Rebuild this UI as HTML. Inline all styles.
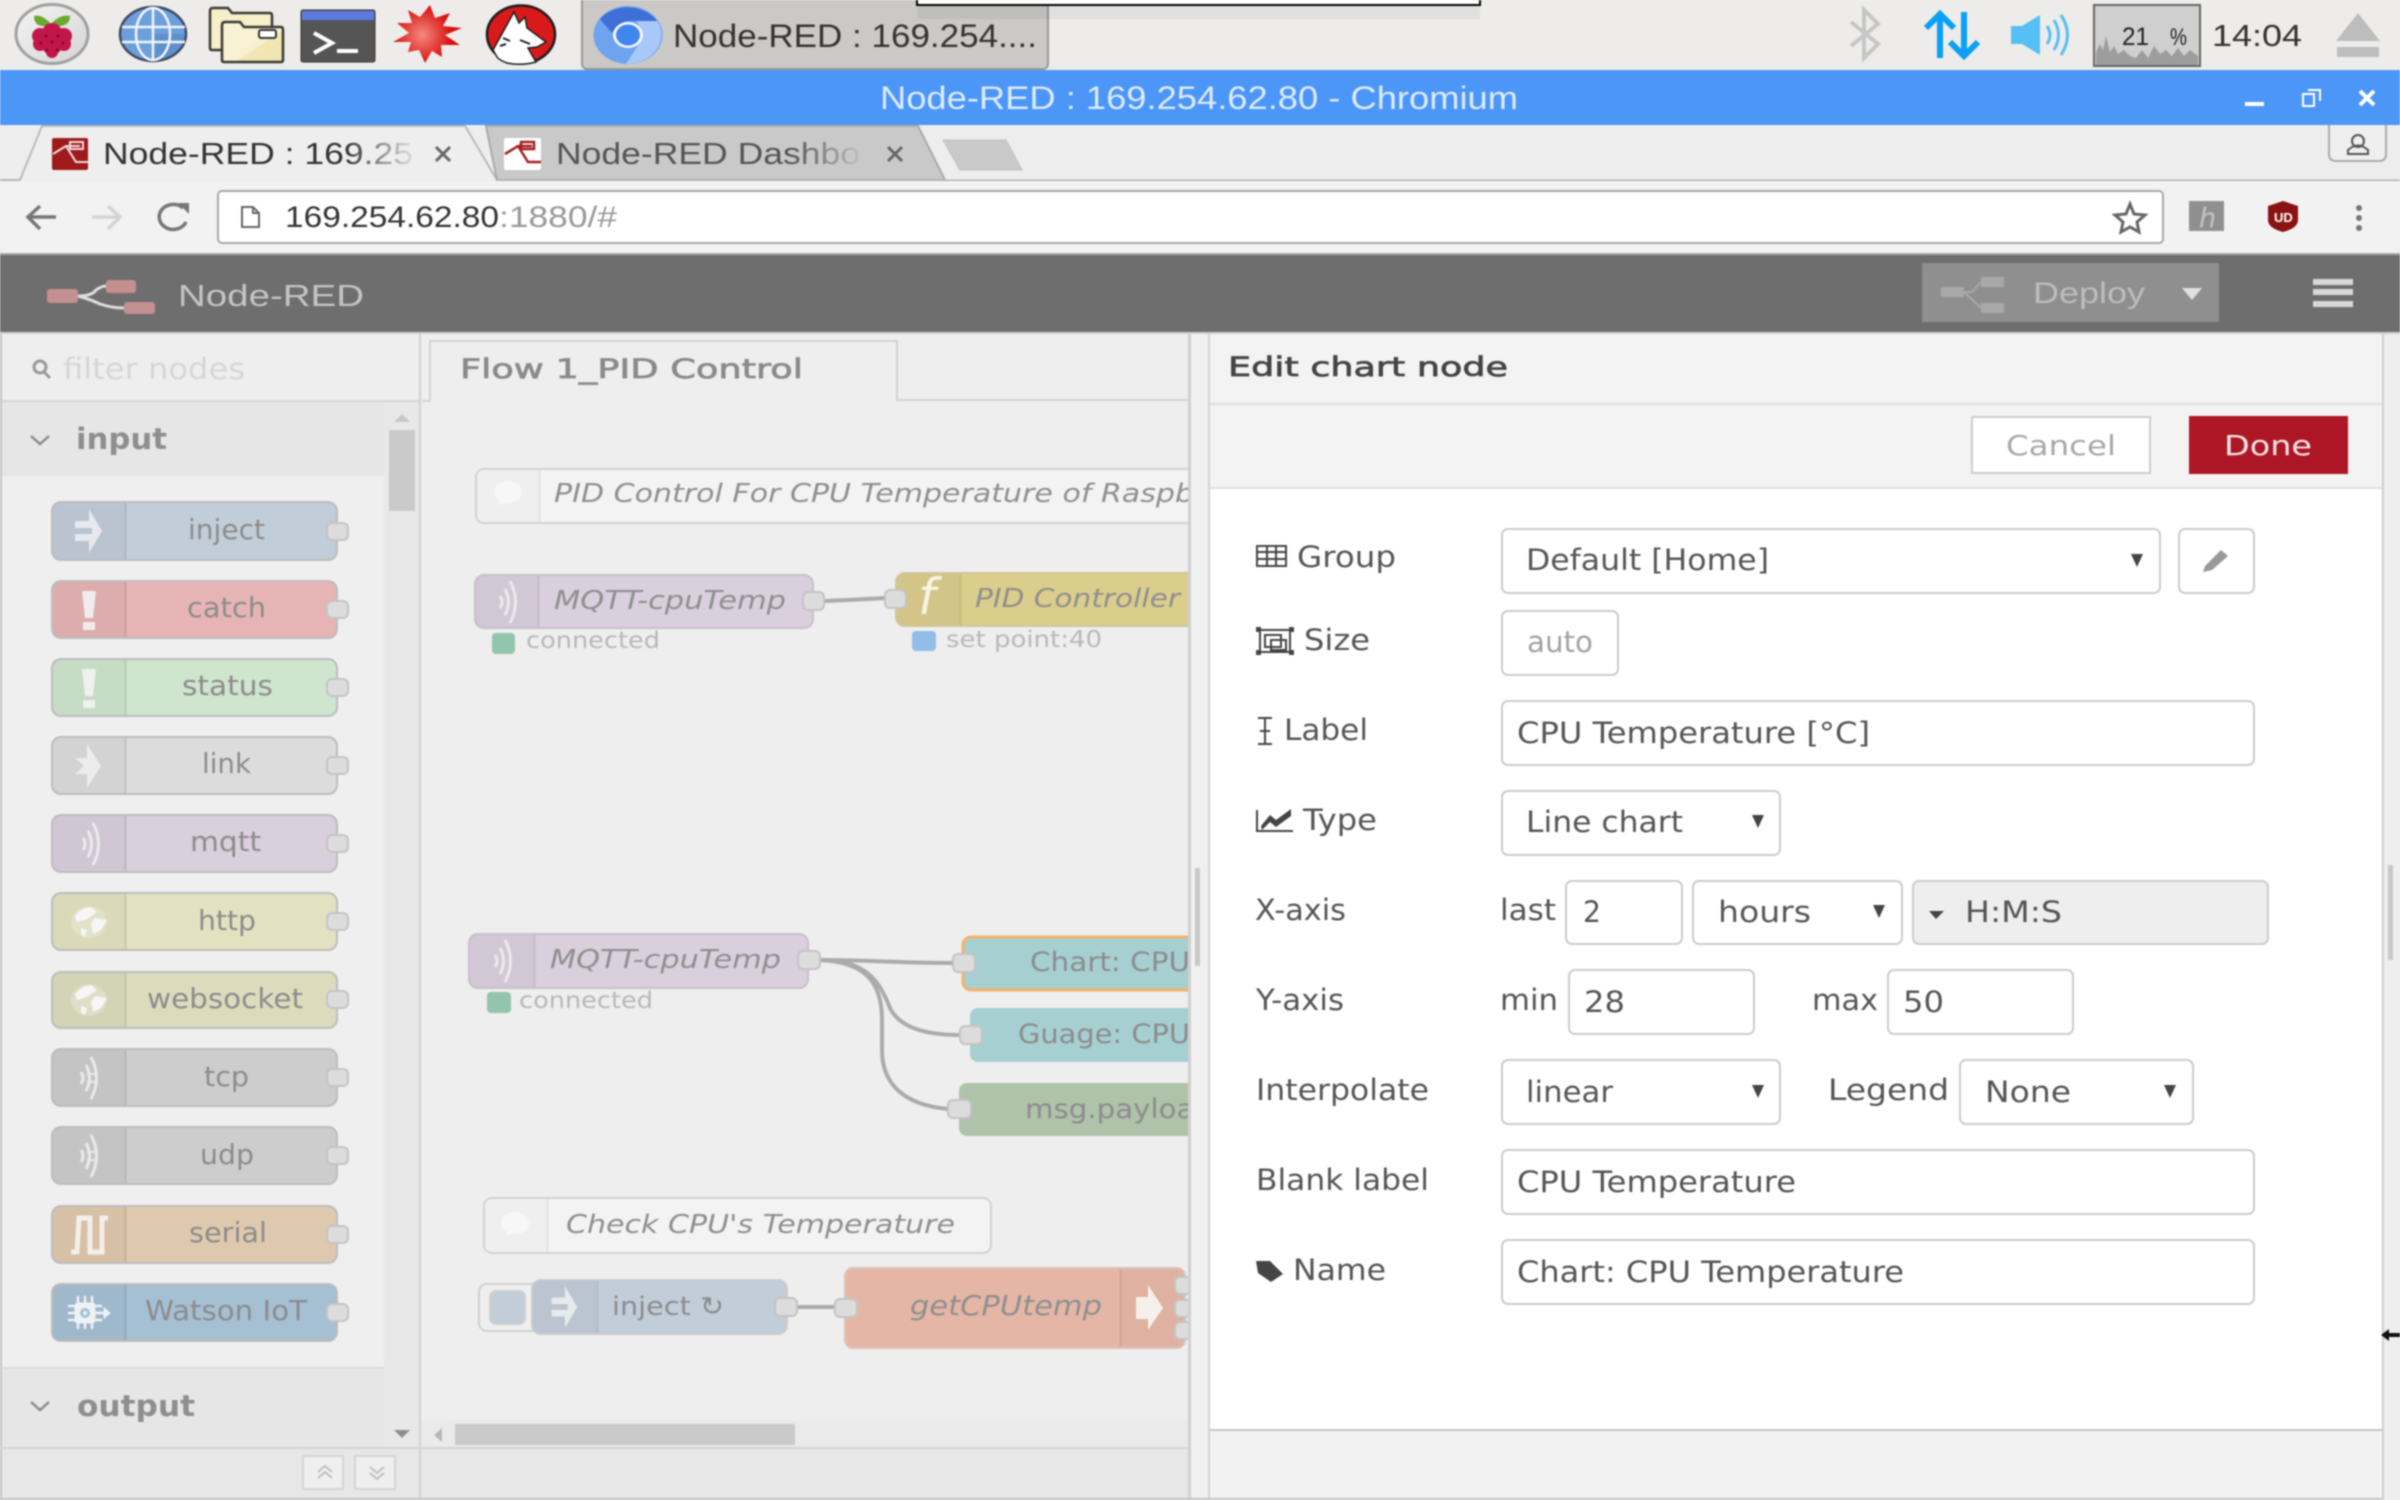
<!DOCTYPE html>
<html><head><meta charset="utf-8"><title>Node-RED : 169.254.62.80 - Chromium</title>
<style>
html,body{margin:0;padding:0;width:2400px;height:1500px;overflow:hidden;background:#eee}
svg{display:block;filter:blur(.75px)}
text{font-family:"DejaVu Sans","Liberation Sans",sans-serif}
.l{font-family:"Liberation Sans",sans-serif}
.n{font-size:28px;fill:#8c8c8c}
.f{font-size:26px;fill:#8f8f8f;font-style:italic}
.s{font-size:23px;fill:#b8b8b8}
.t{font-size:29px;fill:#555}
.i{font-size:29px;fill:#666}
.b{fill:#fff;stroke:#ccc;stroke-width:2}
.port{fill:#dcdcdc;stroke:#c4c4c4;stroke-width:2}
.w{fill:none;stroke:#ababab;stroke-width:4}
.sel{fill:#444}
</style></head><body>
<svg width="2400" height="1500" viewBox="0 0 2400 1500" xmlns="http://www.w3.org/2000/svg">
<defs>
<linearGradient id="fa" gradientUnits="userSpaceOnUse" x1="345" x2="413" y1="0" y2="0"><stop offset="0" stop-color="#333"/><stop offset="1" stop-color="#333" stop-opacity=".08"/></linearGradient>
<linearGradient id="fb" gradientUnits="userSpaceOnUse" x1="790" x2="860" y1="0" y2="0"><stop offset="0" stop-color="#555"/><stop offset="1" stop-color="#555" stop-opacity=".08"/></linearGradient>
<radialGradient id="wg" gradientUnits="userSpaceOnUse" cx="422" cy="35" r="30"><stop offset="0" stop-color="#f58a80"/><stop offset=".55" stop-color="#e2453f"/><stop offset="1" stop-color="#d80f0f"/></radialGradient>
<linearGradient id="ras" x1="0" y1="0" x2="1" y2="1"><stop offset="0" stop-color="#f4f4f4"/><stop offset="1" stop-color="#d4d4d4"/></linearGradient>
<linearGradient id="fol" x1="0" y1="0" x2="1" y2="1"><stop offset="0" stop-color="#f9f3d8"/><stop offset=".6" stop-color="#f7f0d0"/><stop offset=".62" stop-color="#f2e6b4"/><stop offset="1" stop-color="#f0e3ae"/></linearGradient>
<clipPath id="flow"><rect x="422" y="402" width="766" height="1018"/></clipPath>
<g id="inj" fill="#eef0f2" opacity=".85"><path d="M-13-10H1V-22L14 0 1 22V10H-13V3H4V-3H-13z"/></g>
<g id="exc" fill="#f4f4f4" opacity=".9"><path d="M-7-19H7L4 8H-4z"/><rect x="-6" y="12" width="12" height="8"/></g>
<g id="lnk" fill="#eeeeee" opacity=".9"><path d="M-1-22L13 0-1 22V8H-13L-4 0-13-8H-1z"/></g>
<g id="wav" fill="none" stroke="#f0f0f0" stroke-width="3" opacity=".85"><path d="M-6-6Q-2 0-6 6"/><path d="M-1-13Q6 0-1 13"/><path d="M4-21Q15 0 4 21"/></g>
<g id="wv2" fill="none" stroke="#f0f0f0" stroke-width="3" opacity=".85"><path d="M-8-6Q-4 0-8 6"/><path d="M-3-13Q4 0-3 13"/><path d="M2-21Q13 0 2 21"/><path d="M-2-4L9-4M-2 4L9 4" stroke-width="2"/></g>
<g id="glb" fill="#f6f6f6"><path d="M-18 0A18 16 0 0 1 18 0 18 16 0 0 1-18 0z" opacity=".3"/><path d="M-14-6Q-8-14 2-15L8-10-2-3-12 0zM6-4L18-2 12 8 4 12 2 2zM-8 6L-2 8-4 15-8 12z"/></g>
</defs>

<!-- base -->
<rect width="2400" height="1500" fill="#eeeeee"/>
<rect width="2400" height="70" fill="#edecea"/>

<!-- launcher icons -->
<ellipse cx="52" cy="34" rx="36" ry="29.500" fill="url(#ras)" stroke="#a0a0a0" stroke-width="3"/>
<path d="M34 16Q42 14 51 24 60 14 70 16 70 25 60 26H42Q34 25 34 16z" fill="#6aa82e"/>
<g fill="#c2154a"><circle cx="52" cy="33" r="10"/><circle cx="40" cy="36" r="8"/><circle cx="64" cy="36" r="8"/><circle cx="52" cy="45" r="10"/><circle cx="40" cy="44" r="7"/><circle cx="64" cy="44" r="7"/><circle cx="52" cy="52" r="6"/></g>
<g fill="#7d0d30"><circle cx="46" cy="36" r="1.500"/><circle cx="58" cy="36" r="1.500"/><circle cx="52" cy="42" r="1.500"/><circle cx="41" cy="43" r="1.500"/><circle cx="63" cy="43" r="1.500"/><circle cx="47" cy="50" r="1.500"/><circle cx="57" cy="50" r="1.500"/></g>
<ellipse cx="153" cy="34" rx="33" ry="27" fill="#6d9fdc" stroke="#3d4a60" stroke-width="2.500"/>
<path d="M153 34H185A33 27 0 0 1 153 60z" fill="#5f90cd"/>
<g fill="none" stroke="#f0f5fb" stroke-width="2.500"><ellipse cx="153" cy="34" rx="17" ry="26"/><path d="M153 7V61M122 27H185M122 42H185"/></g>
<path d="M210 11Q210 8 213 8H228L232 13H270Q272 13 272 16V48Q272 50 270 50H212Q210 50 210 48z" fill="#f7efca" stroke="#3a3a34" stroke-width="2.500"/>
<path d="M222 25Q222 22 225 22H240L244 27H281Q283 27 283 30V60Q283 62 281 62H224Q222 62 222 60z" fill="url(#fol)" stroke="#3a3a34" stroke-width="2.500"/>
<rect x="259" y="30" width="17" height="8" rx="2" fill="#fff" stroke="#333" stroke-width="2"/>
<rect x="301" y="10" width="74" height="52" rx="2" fill="#555" stroke="#333"/>
<rect x="302" y="11" width="72" height="9" fill="#5d7ae0"/>
<path d="M314 33L332 43 314 53" fill="none" stroke="#fff" stroke-width="4"/><rect x="337" y="49" width="21" height="4" fill="#fff"/>
<path d="M430 5L435 18 450 13 443 26 462 28 445 35 460 45 441 45 442 57 432 51 425 63 419 50 408 52 411 42 393 42 409 33 397 23 412 23 408 10 420 17z" fill="url(#wg)"/>
<ellipse cx="521" cy="34.500" rx="34" ry="29" fill="#d81a1a" stroke="#1c1c1c" stroke-width="2.500"/>
<path d="M493 50L514 12 519 23 525 17 527 28 546 42 537 47 528 48 536 62Q521 66 507 63 499 60 497 57z" fill="#fff" stroke="#1c1c1c" stroke-width="1.500"/>
<path d="M503 38L510 41M500 46L506 44M520 40L530 44" stroke="#222" stroke-width="2" fill="none"/>
<!-- taskbar button -->
<rect x="582" y="-4" width="466" height="73" rx="5" fill="#cbc9c5" stroke="#999" stroke-width="2"/>
<ellipse cx="628" cy="35" rx="34.500" ry="29" fill="#6ea3ef"/>
<path d="M600 19A34.500 29 0 0 1 657 21H628Q618 22 612 33z" fill="#3d6fd6"/>
<path d="M657 21A34.500 29 0 0 1 626 64L641 41Q644 30 636 21z" fill="#a8c8fa"/>
<ellipse cx="628" cy="35" rx="15" ry="13" fill="#f4f7fc"/><ellipse cx="628" cy="35" rx="12" ry="10.500" fill="#3f86ee"/>
<text class="l" x="673" y="47" font-size="32" fill="#333" textLength="364" lengthAdjust="spacingAndGlyphs">Node-RED : 169.254....</text>
<!-- tooltip sliver -->
<rect x="917" y="5" width="563" height="14" fill="#000" opacity=".05"/>
<rect x="917" y="-4" width="563" height="9" fill="#fff" stroke="#000" stroke-width="2"/>

<!-- tray -->
<path d="M1851 22L1878 44 1864 58V10L1878 24 1851 46" fill="none" stroke="#c6c6c6" stroke-width="4"/>
<path d="M1940 58V16M1926 28L1940 14 1954 28" fill="none" stroke="#0aa0f5" stroke-width="6"/>
<path d="M1964 12V54M1950 42L1964 56 1978 42" fill="none" stroke="#0aa0f5" stroke-width="6"/>
<path d="M2011 26H2022L2040 15V55L2022 44H2011z" fill="#56bff5"/>
<g fill="none" stroke="#56bff5" stroke-width="3"><path d="M2047 26Q2053 35 2047 44"/><path d="M2054 20Q2063 35 2054 50"/><path d="M2061 15Q2074 35 2061 55"/></g>
<rect x="2094" y="5" width="106" height="61" fill="#cfcfcf" stroke="#666" stroke-width="2"/>
<path d="M2096 65V52L2100 44 2103 50 2106 36 2110 52 2114 46 2118 54 2124 50 2130 56 2136 58 2142 50 2148 58 2154 46 2160 54 2166 50 2172 56 2178 48 2184 56 2190 50 2198 56V65z" fill="#9d9d9d"/>
<text class="l" x="2122" y="45" font-size="25" fill="#222" textLength="27" lengthAdjust="spacingAndGlyphs">21</text>
<text class="l" x="2170" y="45" font-size="24" fill="#222" textLength="17" lengthAdjust="spacingAndGlyphs">%</text>
<text class="l" x="2212" y="46" font-size="31" fill="#333" textLength="90" lengthAdjust="spacingAndGlyphs">14:04</text>
<path d="M2358 13L2380 41H2336z" fill="#bdbdbd"/><rect x="2337" y="47" width="42" height="10" fill="#bdbdbd"/>

<!-- title bar -->
<rect y="70" width="2400" height="55" fill="#4c96f8"/>
<text class="l" x="880" y="109" font-size="32" fill="#dcebff" textLength="638" lengthAdjust="spacingAndGlyphs">Node-RED : 169.254.62.80 - Chromium</text>
<rect x="2245" y="102" width="19" height="4" fill="#fff"/>
<path d="M2303 94H2314V106H2303z" fill="none" stroke="#fff" stroke-width="2"/><path d="M2308 90H2320V101" fill="none" stroke="#fff" stroke-width="2"/>
<path d="M2360 91L2374 105M2374 91L2360 105" stroke="#fff" stroke-width="4"/>

<!-- tab strip -->
<rect y="125" width="2400" height="56" fill="#ededed"/>
<path d="M0 180H20L42 126H465L497 180" fill="#eeeeee" stroke="#bbb" stroke-width="2"/>
<path d="M486 126H918L945 180H497z" fill="#c9c9c9" stroke="#aaa" stroke-width="2"/>
<path d="M943 140H1006L1022 170H960z" fill="#c9c9c9" stroke="#c0c0c0" stroke-width="1"/>
<path d="M0 180.500H20M497 180.500H2400" stroke="#b5b5b5" stroke-width="2"/>
<rect x="52" y="138" width="36" height="32" rx="2" fill="#9f1a1a"/>
<g fill="none" stroke="#f0dcdc" stroke-width="2"><path d="M53 154L66 146H80M66 146L76 162H88"/><rect x="70" y="142" width="13" height="7"/></g>
<text class="l" x="103" y="164" font-size="31" fill="url(#fa)" textLength="310" lengthAdjust="spacingAndGlyphs">Node-RED : 169.25</text>
<path d="M436 147L450 161M450 147L436 161" stroke="#666" stroke-width="3"/>
<rect x="504" y="138" width="37" height="32" rx="2" fill="#fff"/>
<g fill="none" stroke="#a52020" stroke-width="2.500"><path d="M505 154L518 146H532M518 146L528 162H541"/><rect x="521" y="142" width="13" height="7"/></g>
<text class="l" x="556" y="164" font-size="31" fill="url(#fb)" textLength="304" lengthAdjust="spacingAndGlyphs">Node-RED Dashbo</text>
<path d="M888 147L902 161M902 147L888 161" stroke="#666" stroke-width="3"/>
<path d="M2329 125V154Q2329 161 2336 161H2379Q2386 161 2386 154V125" fill="#efefef" stroke="#aaa" stroke-width="2"/>
<circle cx="2358" cy="141" r="6" fill="none" stroke="#555" stroke-width="2"/><path d="M2348 154V150Q2358 141 2368 150V154z" fill="none" stroke="#555" stroke-width="2"/>

<!-- toolbar -->
<rect y="181" width="2400" height="72" fill="#f2f2f2"/>
<path d="M28 217H56M40 206L28 217 40 229" fill="none" stroke="#777" stroke-width="3.500"/>
<path d="M92 217H120M108 206L120 217 108 229" fill="none" stroke="#d4d4d4" stroke-width="3.500"/>
<path d="M183 208A14 12.500 0 1 0 186 222" fill="none" stroke="#777" stroke-width="3.500"/><path d="M178 203H189V214z" fill="#777"/>
<rect x="218" y="191" width="1945" height="52" rx="4" fill="#fff" stroke="#a8a8a8" stroke-width="2"/>
<path d="M242 207H253L259 213V227H242zM253 207V213H259" fill="none" stroke="#666" stroke-width="2"/>
<text class="l" x="285" y="227" font-size="30" fill="#333" textLength="214" lengthAdjust="spacingAndGlyphs">169.254.62.80</text>
<text class="l" x="499" y="227" font-size="30" fill="#999" textLength="118" lengthAdjust="spacingAndGlyphs">:1880/#</text>
<path d="M2130 204L2134 214 2145 215 2137 222 2139 232 2130 227 2121 232 2123 222 2115 215 2126 214z" fill="none" stroke="#666" stroke-width="3"/>
<rect x="2189" y="201" width="35" height="30" fill="#8f8f8f"/>
<text x="2199" y="227" font-size="27" font-style="italic" fill="#c4c4c4" font-family="Liberation Serif,serif">h</text>
<path d="M2283 201L2298 206V220Q2298 228 2283 232 2268 228 2268 220V206z" fill="#8a1212"/>
<text class="l" x="2274" y="222" font-size="13" font-weight="bold" fill="#fff">UD</text>
<g fill="#777"><circle cx="2359" cy="208" r="3"/><circle cx="2359" cy="218" r="3"/><circle cx="2359" cy="228" r="3"/></g>

<!-- node-red header -->
<rect y="253" width="2400" height="79" fill="#6e6e6e"/>
<rect y="253" width="2400" height="2" fill="#a8a8a8"/>
<path d="M78 296Q92 296 96 290 102 286 106 286M78 296Q92 300 100 304 112 308 124 308" fill="none" stroke="#ddd" stroke-width="3"/>
<rect x="47" y="289" width="31" height="14" rx="3" fill="#c48f8f"/><rect x="106" y="280" width="30" height="13" rx="3" fill="#c48f8f"/><rect x="124" y="302" width="31" height="12" rx="3" fill="#c48f8f"/>
<text class="l" x="178" y="306" font-size="31" fill="#c4c4c4" textLength="186" lengthAdjust="spacingAndGlyphs">Node-RED</text>
<rect x="1922" y="263" width="297" height="59" fill="#8f8f8f"/>
<path d="M1964 292H1972L1981 282M1964 292L1981 308" fill="none" stroke="#a8a8a8" stroke-width="2"/>
<rect x="1941" y="287" width="23" height="10" fill="#a8a8a8"/><rect x="1981" y="277" width="23" height="10" fill="#a8a8a8"/><rect x="1981" y="303" width="23" height="10" fill="#a8a8a8"/>
<text class="l" x="2033" y="303" font-size="30" fill="#bdbdbd" textLength="112" lengthAdjust="spacingAndGlyphs">Deploy</text>
<path d="M2182 288H2202L2192 300z" fill="#e0e0e0"/>
<g fill="#d8d8d8"><rect x="2313" y="279" width="40" height="6"/><rect x="2313" y="289" width="40" height="6"/><rect x="2313" y="301" width="40" height="6"/></g>
<rect y="332" width="2400" height="2" fill="#d0d0d0"/>

<!-- sidebar -->
<rect x="0" y="334" width="2" height="1166" fill="#c4c4c4"/>
<circle cx="40" cy="367" r="6" fill="none" stroke="#9a9a9a" stroke-width="3"/><path d="M44 372L50 378" stroke="#9a9a9a" stroke-width="3"/>
<text class="i" x="63" y="379" style="fill:#d6d6d6" textLength="182" lengthAdjust="spacingAndGlyphs">filter nodes</text>
<rect x="2" y="400" width="418" height="2" fill="#d4d4d4"/>
<rect x="419" y="334" width="2" height="1166" fill="#d0d0d0"/>
<rect x="2" y="402" width="382" height="74" fill="#e6e6e6"/>
<rect x="2" y="476" width="382" height="892" fill="#efefef"/>
<rect x="384" y="402" width="35" height="1045" fill="#e8e8e8"/>
<path d="M394 422L402 414 410 422z" fill="#c8c8c8"/><rect x="389" y="430" width="26" height="81" fill="#cacaca"/>
<path d="M394 1430L402 1438 410 1430z" fill="#8e8e8e"/>
<path d="M31 436L40 444 49 436" fill="none" stroke="#8c8c8c" stroke-width="2.500"/>
<text x="76" y="449" font-size="29" font-weight="bold" fill="#8e8e8e" textLength="91" lengthAdjust="spacingAndGlyphs">input</text>

<!-- palette -->
<g stroke="#bdbdbd" stroke-width="2">
<rect x="52" y="502" width="285" height="58" rx="9" fill="#c1cdd9"/>
<rect x="52" y="581" width="285" height="57" rx="9" fill="#e6b4b4"/>
<rect x="52" y="659" width="285" height="57" rx="9" fill="#cfe5ce"/>
<rect x="52" y="737" width="285" height="57" rx="9" fill="#dcdcdc"/>
<rect x="52" y="815" width="285" height="57" rx="9" fill="#dacfdd"/>
<rect x="52" y="893" width="285" height="57" rx="9" fill="#e3e2c0"/>
<rect x="52" y="972" width="285" height="56" rx="9" fill="#dcdcbd"/>
<rect x="52" y="1049" width="285" height="57" rx="9" fill="#cdcdcd"/>
<rect x="52" y="1127" width="285" height="57" rx="9" fill="#cdcdcd"/>
<rect x="52" y="1206" width="285" height="57" rx="9" fill="#dfc9ae"/>
<rect x="52" y="1284" width="285" height="57" rx="9" fill="#a5bfd3"/>
</g>
<g fill="#000" opacity=".035">
<path d="M61 503H125V559H61Q53 559 53 551V511Q53 503 61 503z"/>
<path d="M61 582H125V637H61Q53 637 53 629V590Q53 582 61 582z"/>
<path d="M61 660H125V715H61Q53 715 53 707V668Q53 660 61 660z"/>
<path d="M61 738H125V793H61Q53 793 53 785V746Q53 738 61 738z"/>
<path d="M61 816H125V871H61Q53 871 53 863V824Q53 816 61 816z"/>
<path d="M61 894H125V949H61Q53 949 53 941V902Q53 894 61 894z"/>
<path d="M61 973H125V1027H61Q53 1027 53 1019V981Q53 973 61 973z"/>
<path d="M61 1050H125V1105H61Q53 1105 53 1097V1058Q53 1050 61 1050z"/>
<path d="M61 1128H125V1183H61Q53 1183 53 1175V1136Q53 1128 61 1128z"/>
<path d="M61 1207H125V1262H61Q53 1262 53 1254V1215Q53 1207 61 1207z"/>
<path d="M61 1285H125V1340H61Q53 1340 53 1332V1293Q53 1285 61 1285z"/>
</g>
<g stroke="#000" stroke-opacity=".1" stroke-width="2">
<path d="M125.500 503V559M125.500 582V637M125.500 660V715M125.500 738V793M125.500 816V871M125.500 894V949M125.500 973V1027M125.500 1050V1105M125.500 1128V1183M125.500 1207V1262M125.500 1285V1340"/>
</g>
<use href="#inj" x="88" y="531"/>
<use href="#exc" x="89" y="610"/>
<use href="#exc" x="89" y="688"/>
<use href="#lnk" x="88" y="766"/>
<use href="#wav" x="89" y="844"/>
<use href="#glb" x="89" y="922"/>
<use href="#glb" x="89" y="1000"/>
<use href="#wv2" x="89" y="1078"/>
<use href="#wv2" x="89" y="1156"/>
<path d="M71 1252H77L79 1218H90V1252H102V1218H108" fill="none" stroke="#f4efe8" stroke-width="5"/>
<g fill="#eef2f6" stroke="#eef2f6"><rect x="75" y="1303" width="20" height="20" rx="3"/><path d="M78 1296V1329M85 1296V1329M92 1296V1329M68 1306H102M68 1313H102M68 1320H102" stroke-width="2.500"/><path d="M95 1313H105" stroke-width="2.500"/><path d="M104 1308L110 1313 104 1318z"/></g>
<circle cx="85" cy="1313" r="5" fill="#a5bfd3"/><circle cx="85" cy="1313" r="2" fill="#eef2f6"/>
<g class="port">
<rect x="327" y="523" width="21" height="17" rx="5"/><rect x="327" y="601" width="21" height="17" rx="5"/><rect x="327" y="679" width="21" height="17" rx="5"/><rect x="327" y="757" width="21" height="17" rx="5"/><rect x="327" y="835" width="21" height="17" rx="5"/><rect x="327" y="913" width="21" height="17" rx="5"/><rect x="327" y="991" width="21" height="17" rx="5"/><rect x="327" y="1069" width="21" height="17" rx="5"/><rect x="327" y="1147" width="21" height="17" rx="5"/><rect x="327" y="1226" width="21" height="17" rx="5"/><rect x="327" y="1304" width="21" height="17" rx="5"/>
</g>
<text class="n" x="188" y="539" textLength="77" lengthAdjust="spacingAndGlyphs">inject</text>
<text class="n" x="187" y="617" textLength="79" lengthAdjust="spacingAndGlyphs">catch</text>
<text class="n" x="182" y="695" textLength="91" lengthAdjust="spacingAndGlyphs">status</text>
<text class="n" x="202" y="773" textLength="49" lengthAdjust="spacingAndGlyphs">link</text>
<text class="n" x="190" y="851" textLength="71" lengthAdjust="spacingAndGlyphs">mqtt</text>
<text class="n" x="198" y="930" textLength="58" lengthAdjust="spacingAndGlyphs">http</text>
<text class="n" x="147" y="1008" textLength="156" lengthAdjust="spacingAndGlyphs">websocket</text>
<text class="n" x="204" y="1086" textLength="45" lengthAdjust="spacingAndGlyphs">tcp</text>
<text class="n" x="200" y="1164" textLength="54" lengthAdjust="spacingAndGlyphs">udp</text>
<text class="n" x="189" y="1242" textLength="78" lengthAdjust="spacingAndGlyphs">serial</text>
<text class="n" x="145" y="1320" textLength="162" lengthAdjust="spacingAndGlyphs">Watson IoT</text>

<rect x="2" y="1367" width="382" height="2" fill="#dadada"/>
<rect x="2" y="1369" width="382" height="78" fill="#e6e6e6"/>
<path d="M31 1402L40 1410 49 1402" fill="none" stroke="#8c8c8c" stroke-width="2.500"/>
<text x="77" y="1416" font-size="29" font-weight="bold" fill="#8e8e8e" textLength="118" lengthAdjust="spacingAndGlyphs">output</text>
<rect x="0" y="1447" width="1190" height="2" fill="#d4d4d4"/>
<rect x="2" y="1449" width="1188" height="49" fill="#e7e7e7"/>
<rect x="419" y="1449" width="2" height="49" fill="#d0d0d0"/>
<rect x="303" y="1456" width="40" height="33" fill="#efefef" stroke="#d4d4d4" stroke-width="2"/>
<rect x="355" y="1456" width="40" height="33" fill="#efefef" stroke="#d4d4d4" stroke-width="2"/>
<path d="M318 1472L325 1466 332 1472M318 1478L325 1472 332 1478" fill="none" stroke="#c0c0c0" stroke-width="2"/>
<path d="M370 1467L377 1473 384 1467M370 1473L377 1479 384 1473" fill="none" stroke="#c0c0c0" stroke-width="2"/>
<rect x="0" y="1498" width="2400" height="2" fill="#c4c4c4"/>

<!-- workspace -->
<path d="M430 401V341H897V400H1190" fill="#eeeeee" stroke="#d2d2d2" stroke-width="2"/>
<text x="460" y="378" font-size="27" fill="#8a8a8a" stroke="#8a8a8a" stroke-width=".7" textLength="343" lengthAdjust="spacingAndGlyphs">Flow 1_PID Control</text>
<path d="M422 401H430" stroke="#d2d2d2" stroke-width="2"/>

<g clip-path="url(#flow)">
<!-- comment 1 -->
<rect x="476" y="469" width="760" height="54" rx="8" fill="#f3f3f3" stroke="#d2d2d2" stroke-width="2"/>
<path d="M539 470H484Q477 470 477 478V514Q477 522 484 522H539z" fill="#efefef"/><path d="M539.500 470V522" stroke="#e2e2e2" stroke-width="2"/>
<ellipse cx="508" cy="492" rx="14" ry="11" fill="#f7f7f7"/><path d="M496 505L504 498 510 502z" fill="#f7f7f7"/>
<text class="f" x="554" y="502" textLength="640" lengthAdjust="spacingAndGlyphs">PID Control For CPU Temperature of Raspb</text>

<!-- mqtt 1 -->
<path class="w" d="M824 601Q850 600 885 598"/>
<rect x="475" y="575" width="338" height="53" rx="9" fill="#dacfdd" stroke="#c8c0cc" stroke-width="2"/>
<path d="M538 576H484Q476 576 476 584V619Q476 627 484 627H538z" fill="#000" opacity=".035"/><path d="M538.500 576V627" stroke="#000" stroke-opacity=".08" stroke-width="2"/>
<use href="#wav" x="506" y="602"/>
<text class="f" x="554" y="609" textLength="232" lengthAdjust="spacingAndGlyphs">MQTT-cpuTemp</text>
<rect class="port" x="803" y="592" width="21" height="18" rx="5"/>
<rect x="492" y="633" width="23" height="21" rx="4" fill="#93c4ac"/>
<text class="s" x="526" y="648" textLength="134" lengthAdjust="spacingAndGlyphs">connected</text>

<!-- PID -->
<rect x="896" y="573" width="340" height="53" rx="9" fill="#dbcd8c" stroke="#cfc79c" stroke-width="2"/>
<path d="M960 574H905Q897 574 897 582V617Q897 625 905 625H960z" fill="#000" opacity=".035"/><path d="M960.500 574V625" stroke="#000" stroke-opacity=".07" stroke-width="2"/>
<text x="918" y="614" font-size="50" font-style="italic" fill="#f6f3e4" font-family="Liberation Serif,serif">f</text>
<text class="f" x="975" y="607" textLength="205" lengthAdjust="spacingAndGlyphs">PID Controller</text>
<rect class="port" x="885" y="590" width="21" height="18" rx="5"/>
<rect x="912" y="631" width="24" height="20" rx="4" fill="#92bde9"/>
<text class="s" x="946" y="647" textLength="156" lengthAdjust="spacingAndGlyphs">set point:40</text>

<!-- wires 2 -->
<path class="w" d="M820 960C880 960 890 963 953 963"/>
<path class="w" d="M820 960C865 960 878 980 888 1003C895 1025 920 1035 960 1035"/>
<path class="w" d="M820 960C868 962 882 985 882 1020V1050C882 1085 905 1105 948 1109"/>

<!-- mqtt 2 -->
<rect x="469" y="934" width="339" height="54" rx="9" fill="#dacfdd" stroke="#c8c0cc" stroke-width="2"/>
<path d="M534 935H478Q470 935 470 943V979Q470 987 478 987H534z" fill="#000" opacity=".035"/><path d="M534.500 935V987" stroke="#000" stroke-opacity=".08" stroke-width="2"/>
<use href="#wav" x="501" y="961"/>
<text class="f" x="550" y="968" textLength="231" lengthAdjust="spacingAndGlyphs">MQTT-cpuTemp</text>
<rect class="port" x="798" y="951" width="22" height="18" rx="5"/>
<rect x="487" y="992" width="24" height="21" rx="4" fill="#93c4ac"/>
<text class="s" x="519" y="1008" textLength="134" lengthAdjust="spacingAndGlyphs">connected</text>

<!-- chart etc -->
<rect x="963" y="937" width="300" height="53" rx="8" fill="#a6cfd2" stroke="#f5b26b" stroke-width="3"/>
<text x="1030" y="971" font-size="27" fill="#8c8c8c" textLength="160" lengthAdjust="spacingAndGlyphs">Chart: CPU</text>
<rect class="port" x="953" y="954" width="22" height="18" rx="5"/>
<rect x="970" y="1008" width="300" height="54" rx="8" fill="#a6cfd2"/>
<text x="1018" y="1043" font-size="27" fill="#8c8c8c" textLength="172" lengthAdjust="spacingAndGlyphs">Guage: CPU</text>
<rect class="port" x="960" y="1026" width="22" height="18" rx="5"/>
<rect x="959" y="1083" width="300" height="53" rx="8" fill="#afc2aa"/>
<text x="1025" y="1118" font-size="27" fill="#8c8c8c" textLength="188" lengthAdjust="spacingAndGlyphs">msg.payload</text>
<rect class="port" x="948" y="1100" width="23" height="18" rx="5"/>

<!-- comment 2 -->
<rect x="484" y="1198" width="507" height="55" rx="8" fill="#f3f3f3" stroke="#d2d2d2" stroke-width="2"/>
<path d="M547 1199H492Q485 1199 485 1207V1244Q485 1252 492 1252H547z" fill="#efefef"/><path d="M547.500 1199V1252" stroke="#e2e2e2" stroke-width="2"/>
<ellipse cx="515" cy="1223" rx="14" ry="11" fill="#f7f7f7"/><path d="M503 1236L511 1229 517 1233z" fill="#f7f7f7"/>
<text class="f" x="566" y="1233" textLength="389" lengthAdjust="spacingAndGlyphs">Check CPU's Temperature</text>

<!-- inject -->
<path class="w" d="M797 1307H835"/>
<rect x="479" y="1284" width="70" height="47" rx="8" fill="#eeeeee" stroke="#d0d0d0" stroke-width="2"/>
<rect x="490" y="1291" width="35" height="33" rx="6" fill="#c1cdd9" stroke="#cfcfcf" stroke-width="2"/>
<rect x="532" y="1280" width="255" height="54" rx="9" fill="#c1cdd9" stroke="#cccccc" stroke-width="2"/>
<path d="M597 1281H541Q533 1281 533 1289V1325Q533 1333 541 1333H597z" fill="#000" opacity=".035"/><path d="M597.500 1281V1333" stroke="#000" stroke-opacity=".07" stroke-width="2"/>
<g transform="translate(564 1307) scale(.95)"><use href="#inj"/></g>
<text x="612" y="1315" font-size="26" fill="#8c8c8c" textLength="112" lengthAdjust="spacingAndGlyphs">inject ↻</text>
<rect class="port" x="775" y="1298" width="22" height="18" rx="5"/>

<!-- getCPUtemp -->
<rect x="845" y="1268" width="340" height="80" rx="8" fill="#e5b6a5" stroke="#dcc2b8" stroke-width="2"/>
<path d="M1120 1269H1177Q1184 1269 1184 1277V1339Q1184 1347 1177 1347H1120z" fill="#000" opacity=".025"/><path d="M1120.500 1269V1347" stroke="#000" stroke-opacity=".06" stroke-width="2"/>
<path d="M1136 1297H1148V1285L1163 1308 1148 1330V1319H1136z" fill="#f6f0ec"/>
<text class="f" x="910" y="1315" style="font-size:28px" textLength="192" lengthAdjust="spacingAndGlyphs">getCPUtemp</text>
<rect class="port" x="835" y="1299" width="22" height="18" rx="5"/>
<rect class="port" x="1175" y="1277" width="22" height="17" rx="5"/>
<rect class="port" x="1175" y="1300" width="22" height="17" rx="5"/>
<rect class="port" x="1175" y="1322" width="22" height="17" rx="5"/>
</g>

<!-- flow scrollbar -->
<rect x="422" y="1420" width="768" height="27" fill="#eaeaea"/>
<path d="M442 1428L434 1435 442 1442z" fill="#b8b8b8"/>
<rect x="455" y="1424" width="340" height="21" fill="#cacaca"/>

<!-- edit tray -->
<rect x="1190" y="334" width="19" height="1164" fill="#f0f0f0"/>
<rect x="1188" y="334" width="3" height="1164" fill="#d0d0d0"/>
<rect x="1208" y="334" width="2" height="1164" fill="#d4d4d4"/>
<rect x="1195" y="868" width="5" height="98" fill="#c8c8c8"/>
<rect x="1210" y="334" width="1172" height="69" fill="#f3f3f3"/>
<text x="1228" y="376" font-size="27" fill="#444" stroke="#444" stroke-width=".7" textLength="280" lengthAdjust="spacingAndGlyphs">Edit chart node</text>
<rect x="1210" y="403" width="1172" height="2" fill="#dedede"/>
<rect x="1210" y="405" width="1172" height="82" fill="#f3f3f3"/>
<rect x="1210" y="487" width="1172" height="2" fill="#dedede"/>
<rect x="1210" y="489" width="1172" height="940" fill="#fff"/>
<rect x="1210" y="1429" width="1172" height="2" fill="#c4c4c4"/>
<rect x="1210" y="1431" width="1172" height="67" fill="#f2f2f2"/>
<rect x="2382" y="334" width="2" height="1166" fill="#cfcfcf"/>
<rect x="2384" y="334" width="16" height="1166" fill="#eeeeee"/>
<rect x="2388" y="865" width="5" height="95" fill="#c8c8c8"/>

<rect x="1972" y="417" width="178" height="56" fill="#fff" stroke="#ccc" stroke-width="2"/>
<text x="2006" y="455" font-size="28" fill="#a8a8a8" textLength="110" lengthAdjust="spacingAndGlyphs">Cancel</text>
<rect x="2189" y="416" width="159" height="58" fill="#ad1625"/>
<text x="2224" y="455" font-size="28" fill="#f4e6e6" textLength="88" lengthAdjust="spacingAndGlyphs">Done</text>

<!-- form boxes -->
<rect class="b" x="1502" y="529" width="658" height="64" rx="6"/>
<rect class="b" x="2179" y="529" width="75" height="64" rx="6"/>
<rect class="b" x="1502" y="611" width="116" height="64" rx="6"/>
<rect class="b" x="1502" y="701" width="752" height="64" rx="6"/>
<rect class="b" x="1502" y="791" width="278" height="64" rx="6"/>
<rect class="b" x="1566" y="881" width="116" height="63" rx="6"/>
<rect class="b" x="1693" y="881" width="209" height="63" rx="6"/>
<rect x="1913" y="881" width="355" height="63" rx="6" fill="#eeeeee" stroke="#ccc" stroke-width="2"/>
<rect class="b" x="1569" y="970" width="185" height="64" rx="6"/>
<rect class="b" x="1888" y="970" width="185" height="64" rx="6"/>
<rect class="b" x="1502" y="1060" width="278" height="64" rx="6"/>
<rect class="b" x="1960" y="1060" width="233" height="64" rx="6"/>
<rect class="b" x="1502" y="1150" width="752" height="64" rx="6"/>
<rect class="b" x="1502" y="1240" width="752" height="64" rx="6"/>

<!-- select arrows -->
<path class="sel" d="M2131 554H2143L2137 567z"/>
<path class="sel" d="M1752 815H1764L1758 828z"/>
<path class="sel" d="M1873 905H1885L1879 918z"/>
<path class="sel" d="M1929 911H1944L1936 919z"/>
<path class="sel" d="M1752 1085H1764L1758 1098z"/>
<path class="sel" d="M2164 1085H2176L2170 1098z"/>
<path d="M2205 566L2221 550 2228 556 2212 570 2203 572z" fill="#999"/>

<!-- labels -->
<g fill="none" stroke="#444" stroke-width="2">
<rect x="1257" y="546" width="29" height="20"/><path d="M1257 552H1286M1257 559H1286M1267 546V566M1276 546V566"/>
<rect x="1260" y="630" width="30" height="22"/><rect x="1265" y="635" width="16" height="12"/><rect x="1271" y="640" width="15" height="10"/>
<path d="M1258 718H1272M1258 744H1272M1265 718V744M1260 731H1270"/>
<path d="M1257 810V831H1293"/>
</g>
<g fill="#444"><rect x="1256" y="627" width="5" height="5"/><rect x="1289" y="627" width="5" height="5"/><rect x="1256" y="650" width="5" height="5"/><rect x="1289" y="650" width="5" height="5"/></g>
<path d="M1261 826L1270 815 1276 820 1291 809V816L1276 827 1270 822 1262 830z" fill="#444"/>
<path d="M1256 1261H1270L1283 1274 1271 1282 1258 1273z" fill="#444"/>

<text class="t" x="1297" y="567" textLength="99" lengthAdjust="spacingAndGlyphs">Group</text>
<text class="t" x="1526" y="570" textLength="243" lengthAdjust="spacingAndGlyphs">Default [Home]</text>
<text class="t" x="1304" y="650" textLength="66" lengthAdjust="spacingAndGlyphs">Size</text>
<text class="t" x="1527" y="652" style="fill:#a2a2a2" textLength="66" lengthAdjust="spacingAndGlyphs">auto</text>
<text class="t" x="1284" y="740" textLength="84" lengthAdjust="spacingAndGlyphs">Label</text>
<text class="t" x="1517" y="743" textLength="353" lengthAdjust="spacingAndGlyphs">CPU Temperature [°C]</text>
<text class="t" x="1303" y="830" textLength="74" lengthAdjust="spacingAndGlyphs">Type</text>
<text class="t" x="1526" y="832" textLength="157" lengthAdjust="spacingAndGlyphs">Line chart</text>
<text class="t" x="1255" y="920" textLength="91" lengthAdjust="spacingAndGlyphs">X-axis</text>
<text class="t" x="1500" y="920" textLength="56" lengthAdjust="spacingAndGlyphs">last</text>
<text class="t" x="1583" y="922" textLength="18" lengthAdjust="spacingAndGlyphs">2</text>
<text class="t" x="1718" y="922" textLength="93" lengthAdjust="spacingAndGlyphs">hours</text>
<text class="t" x="1965" y="922" textLength="97" lengthAdjust="spacingAndGlyphs">H:M:S</text>
<text class="t" x="1256" y="1010" textLength="88" lengthAdjust="spacingAndGlyphs">Y-axis</text>
<text class="t" x="1500" y="1010" textLength="58" lengthAdjust="spacingAndGlyphs">min</text>
<text class="t" x="1584" y="1012" textLength="41" lengthAdjust="spacingAndGlyphs">28</text>
<text class="t" x="1812" y="1010" textLength="66" lengthAdjust="spacingAndGlyphs">max</text>
<text class="t" x="1903" y="1012" textLength="41" lengthAdjust="spacingAndGlyphs">50</text>
<text class="t" x="1256" y="1100" textLength="173" lengthAdjust="spacingAndGlyphs">Interpolate</text>
<text class="t" x="1526" y="1102" textLength="87" lengthAdjust="spacingAndGlyphs">linear</text>
<text class="t" x="1828" y="1100" textLength="121" lengthAdjust="spacingAndGlyphs">Legend</text>
<text class="t" x="1985" y="1102" textLength="86" lengthAdjust="spacingAndGlyphs">None</text>
<text class="t" x="1256" y="1190" textLength="173" lengthAdjust="spacingAndGlyphs">Blank label</text>
<text class="t" x="1517" y="1192" textLength="279" lengthAdjust="spacingAndGlyphs">CPU Temperature</text>
<text class="t" x="1293" y="1280" textLength="93" lengthAdjust="spacingAndGlyphs">Name</text>
<text class="t" x="1517" y="1282" textLength="387" lengthAdjust="spacingAndGlyphs">Chart: CPU Temperature</text>

<!-- cursor -->
<path d="M2381 1335L2389 1329V1333H2400V1337H2389V1341z" fill="#111"/>
</svg>
</body></html>
